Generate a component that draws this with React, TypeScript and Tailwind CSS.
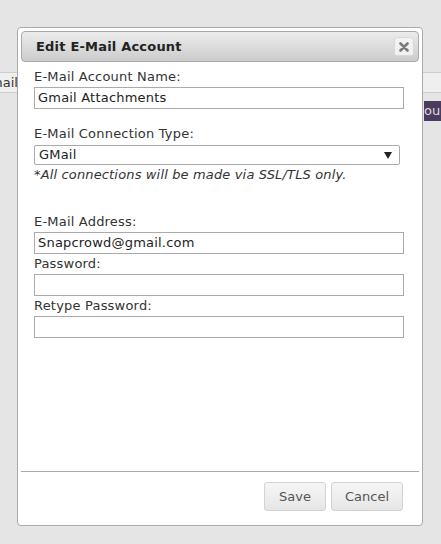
import React from "react";

const font = { fontFamily: '"DejaVu Sans", Verdana, sans-serif' };

function Field({ label, value, className = "" }: { label: string; value?: string; className?: string }) {
  return (
    <div className={className}>
      <div className="h-[16px] leading-[16px] text-[13px] tracking-[0.2px] text-[#333]">{label}</div>
      <div className="mt-[2px] flex h-[22px] w-[370px] items-center border border-[#aaa] bg-white px-[3px] text-[13px] tracking-[0.2px] text-[#222]">
        {value}
      </div>
    </div>
  );
}

export default function App() {
  return (
    <div style={font} className="relative h-[544px] w-[441px] overflow-hidden bg-[#e5e5e5]">
      {/* page behind the modal */}
      <div className="pt-[72px]">
        <div className="flex h-[21px] items-center border-y border-[#cdcdcd] bg-[#efefef] text-[13px] text-[#333]">
          <span className="-ml-[10px]">mail</span>
        </div>
        <div className="mt-[8px] flex justify-end">
          <div className="flex h-[20px] w-[17px] items-center overflow-hidden bg-[#4b3b5f] text-[13px] text-[#ddd]">
            <span className="whitespace-nowrap">our</span>
          </div>
        </div>
      </div>

      {/* modal */}
      <div className="absolute left-[17px] top-[27px] flex h-[499px] w-[406px] flex-col rounded-[4px] border border-[#aaa] bg-white p-[3px]">
        <div className="flex h-[31px] items-center justify-between rounded-[4px] border border-[#aaa] bg-gradient-to-b from-[#ececec] to-[#cccccc] pl-[14px] pr-[4px]">
          <span className="text-[13px] font-bold tracking-[0.2px] text-[#222]">Edit E-Mail Account</span>
          <div className="flex h-[19px] w-[20px] items-center justify-center rounded-[3px] border border-[#d9d9d9] bg-[#f2f2f2]">
            <svg width="10" height="10" viewBox="0 0 10 10">
              <path d="M1.5 1.5 L8.5 8.5 M8.5 1.5 L1.5 8.5" stroke="#7a7a7a" strokeWidth="2.6" strokeLinecap="round" />
            </svg>
          </div>
        </div>

        <div className="flex-1 pl-[13px] pt-[7px]">
          <Field label="E-Mail Account Name:" value="Gmail Attachments" />

          <div className="mt-[17px] h-[16px] leading-[16px] text-[13px] tracking-[0.2px] text-[#333]">E-Mail Connection Type:</div>
          <div className="mt-[3px] flex h-[20px] w-[366px] items-center justify-between rounded-[2px] border border-[#aaa] bg-white pl-[4px] pr-[7px] text-[13px] tracking-[0.2px] text-[#222]">
            <span>GMail</span>
            <svg width="8" height="7" viewBox="0 0 8 7">
              <path d="M0 0 H8 L4 7 Z" fill="#222" />
            </svg>
          </div>
          <div className="mt-[2px] h-[16px] leading-[16px] text-[13px] italic tracking-[0.15px] text-[#333]">
            *All connections will be made via SSL/TLS only.
          </div>

          <Field className="mt-[31px]" label="E-Mail Address:" value="Snapcrowd@gmail.com" />
          <Field className="mt-[2px]" label="Password:" />
          <Field className="mt-[2px]" label="Retype Password:" />
        </div>

        <div className="flex h-[51px] items-start justify-end gap-[5px] border-t border-[#aaa] pr-[16px] pt-[10px]">
          <button className="h-[29px] w-[62px] rounded-[3px] border border-[#d3d3d3] bg-gradient-to-b from-[#f6f6f6] to-[#e6e6e6] text-[13px] text-[#555]">
            Save
          </button>
          <button className="h-[29px] w-[72px] rounded-[3px] border border-[#d3d3d3] bg-gradient-to-b from-[#f6f6f6] to-[#e6e6e6] text-[13px] text-[#555]">
            Cancel
          </button>
        </div>
      </div>
    </div>
  );
}
